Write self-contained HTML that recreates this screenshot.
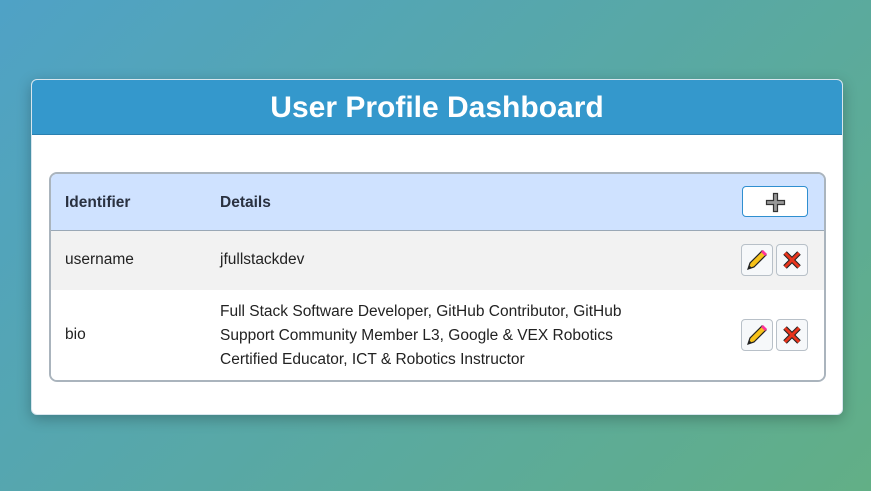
<!DOCTYPE html>
<html><head><meta charset="utf-8"><style>
*{box-sizing:border-box;margin:0;padding:0}
body{width:871px;height:491px;overflow:hidden;background:linear-gradient(135deg,#4fa2c6 0%,#58a8a6 50%,#62af86 100%);font-family:"Liberation Sans",sans-serif;position:relative}
.card{position:absolute;left:31px;top:79px;width:812px;height:336px;background:#fff;border-radius:6px;box-shadow:0 4px 14px rgba(0,0,0,.25);overflow:hidden;border:1px solid #d8e6ee}
.hd{height:55px;background:#3498cc;border-bottom:1px solid #2a80b0;color:#fff;font-weight:bold;font-size:30px;text-align:center;line-height:55px}
.tbl{position:absolute;left:17px;top:92px;width:777px;height:210px;border:2px solid #aab4bd;border-radius:8px;overflow:hidden}
.row{position:absolute;left:0;right:0;font-size:15.5px;color:#222}
.r0{top:0;height:57px;background:#cfe2ff;border-bottom:1px solid #9aa8b6;font-weight:bold;color:#2a3140}
.r1{top:57px;height:59px;background:#f2f2f2}
.r2{top:116px;height:92px;background:#fff}
.c1{position:absolute;left:14px}
.c2{position:absolute;left:169px;width:440px;line-height:24px}
.btn{position:absolute;width:32px;height:32px;border:1px solid #b8c0c8;border-radius:4px;background:#f6f8fa}
.add{position:absolute;left:691px;top:12px;width:66px;height:31px;border:1px solid #2f8fd0;border-radius:4px;background:#fff}
</style></head><body>
<div class="card">
<div class="hd">User Profile Dashboard</div>
<div class="tbl">
<div class="row r0"><span class="c1" style="top:20px">Identifier</span><span class="c2" style="top:17px">Details</span>
<div class="add"><svg width="66" height="31"><path d="M30.5 6.5h4v7h7v4h-7v7h-4v-7h-7v-4h7z" fill="#999" stroke="#333" stroke-width="1.2"/></svg></div></div>
<div class="row r1"><span class="c1" style="top:20px">username</span><span class="c2" style="top:17px">jfullstackdev</span>
<div class="btn" style="left:690px;top:13px"><svg width="30" height="30"><path d="M6 24l2-6 12-12 4 4-12 12z" fill="#f7c21a" stroke="#222" stroke-width="1.2"/><path d="M19 7l2-2 4 4-2 2z" fill="#f39"/><path d="M6 24l1-4 3 3z" fill="#222"/></svg></div>
<div class="btn" style="left:725px;top:13px"><svg width="30" height="30"><path d="M8 8l14 14M22 8L8 22" stroke="#222" stroke-width="5"/><path d="M8 8l14 14M22 8L8 22" stroke="#e8341c" stroke-width="3"/></svg></div></div>
<div class="row r2"><span class="c1" style="top:36px">bio</span><span class="c2" style="top:10px">Full Stack Software Developer, GitHub Contributor, GitHub Support Community Member L3, Google &amp; VEX Robotics Certified Educator, ICT &amp; Robotics Instructor</span>
<div class="btn" style="left:690px;top:29px"><svg width="30" height="30"><path d="M6 24l2-6 12-12 4 4-12 12z" fill="#f7c21a" stroke="#222" stroke-width="1.2"/><path d="M19 7l2-2 4 4-2 2z" fill="#f39"/><path d="M6 24l1-4 3 3z" fill="#222"/></svg></div>
<div class="btn" style="left:725px;top:29px"><svg width="30" height="30"><path d="M8 8l14 14M22 8L8 22" stroke="#222" stroke-width="5"/><path d="M8 8l14 14M22 8L8 22" stroke="#e8341c" stroke-width="3"/></svg></div></div>
</div>
</div>
</body></html>
